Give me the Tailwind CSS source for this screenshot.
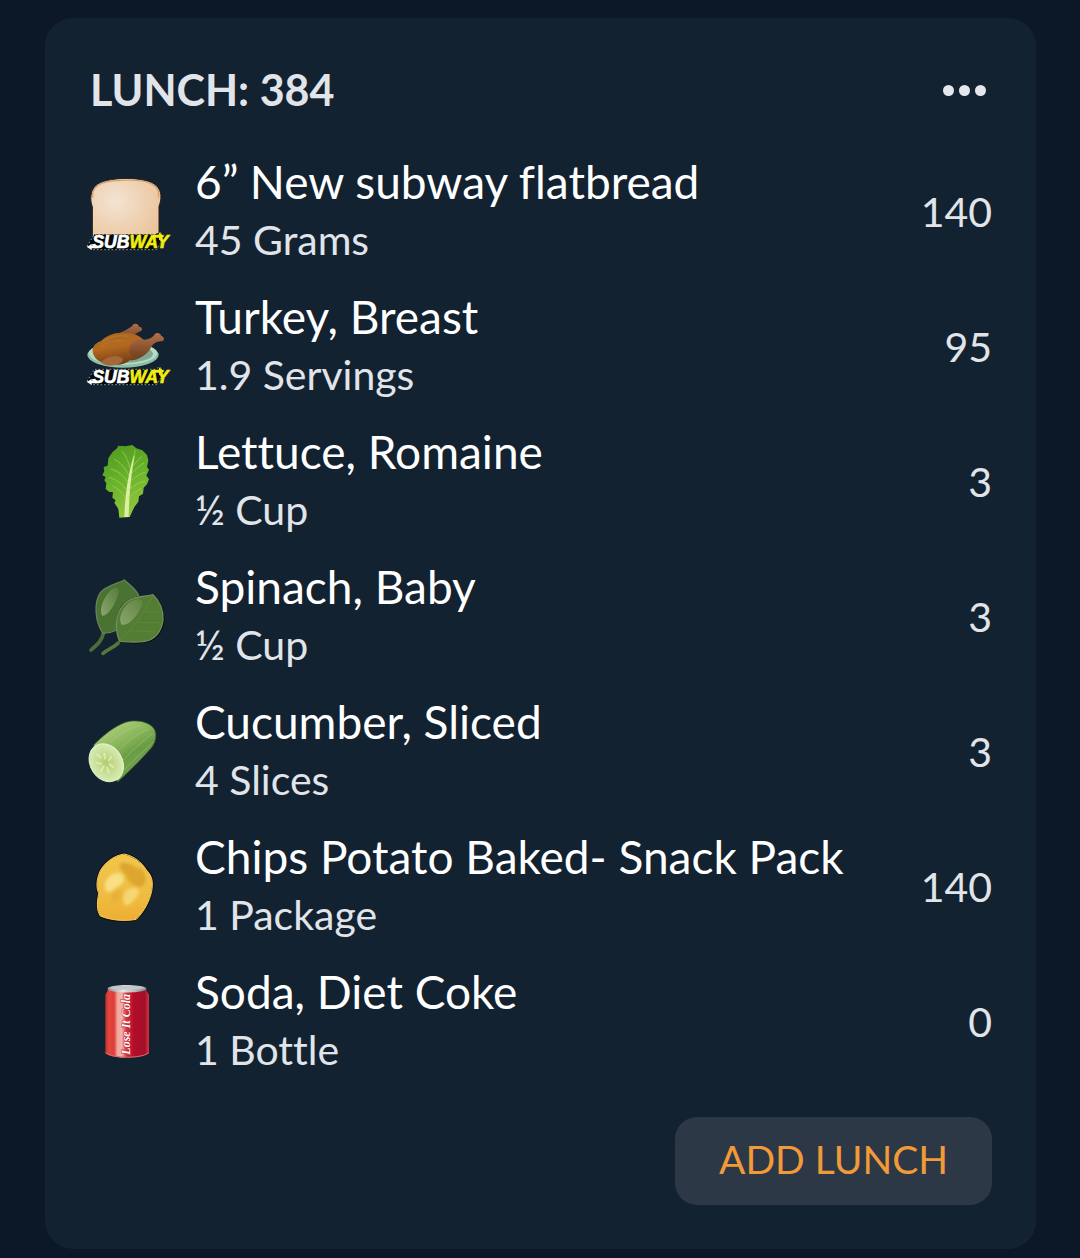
<!DOCTYPE html>
<html lang="en">
<head>
  <meta charset="UTF-8" />
  <meta name="viewport" content="width=device-width, initial-scale=1.0"/>
  <title>Lunch</title>
  <script src="https://cdn.jsdelivr.net/npm/@tailwindcss/browser@4"></script>
</head>
<body class="min-h-screen bg-[#0c1828] pt-[18px] pb-[9px] pl-[45px] pr-11 font-['Lato','Liberation_Sans',sans-serif] text-[#e1e5ea] [font-variant-ligatures:none]">
  <main class="rounded-[28px] bg-[#132231] pl-10 pr-11 pt-[42px] pb-11">
    <!-- Header -->
    <header class="flex items-center justify-between pl-[5px] pr-1.5">
      <h1 class="text-[43px] leading-[60px] font-bold">LUNCH: 384</h1>
      <button aria-label="Lunch options" class="flex h-[60px] items-center gap-[5px]">
        <span class="size-[11px] rounded-full bg-[#e4e7eb]"></span>
        <span class="size-[11px] rounded-full bg-[#e4e7eb]"></span>
        <span class="size-[11px] rounded-full bg-[#e4e7eb]"></span>
      </button>
    </header>

    <!-- Food list -->
    <ul class="mt-[34px] flex flex-col gap-[19px]">
      <li class="flex items-center gap-[30px]">
        <svg class="h-[100px] w-20 shrink-0 overflow-visible" viewBox="30 -9 240 300" aria-hidden="true">
          <defs>
            <radialGradient id="bread" cx=".35" cy=".35" r=".7"><stop offset="0" stop-color="#f4e3d3"/><stop offset="1" stop-color="#ebc59c"/></radialGradient>
          </defs>
          <path d="M52 235V125C44 105 46 76 62 62C88 34 216 32 244 62C262 78 260 104 252 124V235Z" fill="url(#bread)" stroke="#2a1c14" stroke-width="3"/>
          <path d="M54 98C50 82 56 70 70 60C100 42 206 40 234 59C248 68 254 80 250 98" fill="none" stroke="#d2a276" stroke-width="4"/>
          <path d="M36 244L58 208H240L254 201L272 216L258 232L244 254H50Z" fill="#05080a" stroke="#d8dbd5" stroke-width="2" stroke-dasharray="5 6"/>
          <path d="M36 246L50 236V242H64V250H50V255Z" fill="#fff"/>
          <path d="M236 209H252V202L268 214L252 226V218H232Z" fill="#f0ec12"/>
          <text x="52" y="250" class="font-['Liberation_Sans_Narrow','Liberation_Sans',sans-serif] text-[53px] font-bold italic" fill="#fff" stroke="#fff" stroke-width="2">SUB<tspan fill="#f0ec12" stroke="#f0ec12">WAY</tspan></text>
        </svg>
        <div class="min-w-0 flex-1">
          <h2 class="text-[46px] leading-[56px] text-white">6” New subway flatbread</h2>
          <p class="text-[41px] leading-[60px]">45 Grams</p>
        </div>
        <span class="text-[41px] leading-[58px]">140</span>
      </li>

      <li class="flex items-center gap-[30px]">
        <svg class="h-[100px] w-20 shrink-0 overflow-visible" viewBox="30 -24 240 300" aria-hidden="true">
          <defs>
            <linearGradient id="turkey" x1="0" y1="0" x2=".3" y2="1"><stop offset="0" stop-color="#a96522"/><stop offset=".5" stop-color="#b4691f"/><stop offset="1" stop-color="#743f19"/></linearGradient>
            <linearGradient id="leg" x1="0" y1="0" x2="0" y2="1"><stop offset="0" stop-color="#b0704a"/><stop offset="1" stop-color="#74401f"/></linearGradient>
          </defs>
          <ellipse cx="144" cy="150" rx="107" ry="38" fill="#8dbfa5"/>
          <ellipse cx="144" cy="145" rx="103" ry="34" fill="#b6dbc5"/>
          <ellipse cx="146" cy="147" rx="88" ry="27" fill="#7fa995"/>
          <path d="M128 86C146 80 158 72 172 63C174 54 190 54 192 65C204 66 204 78 193 80C180 86 174 92 168 104Z" fill="url(#leg)"/>
          <path d="M58 154C46 132 56 116 78 108C96 90 124 80 152 84C182 84 208 98 214 120C222 148 190 168 164 166C152 180 116 184 98 176C80 174 64 166 58 154Z" fill="url(#turkey)"/>
          <path d="M82 112C104 94 136 88 160 94M76 126C96 110 126 102 148 108" fill="none" stroke="#c98336" stroke-width="5" opacity=".35"/>
          <path d="M166 122C174 106 190 102 208 104C222 104 232 98 238 90C242 80 258 84 258 92C270 96 270 108 258 109C244 110 238 114 230 124C222 142 204 160 184 158C164 154 158 138 166 122Z" fill="url(#leg)"/>
          <path d="M78 172C92 158 114 148 140 158C150 164 136 178 120 180C104 184 88 182 78 172Z" fill="#a6683a"/>
          <path d="M36 229L58 193H240L254 186L272 201L258 217L244 239H50Z" fill="#05080a" stroke="#d8dbd5" stroke-width="2" stroke-dasharray="5 6"/>
          <path d="M36 231L50 221V227H64V235H50V240Z" fill="#fff"/>
          <path d="M236 194H252V187L268 199L252 211V203H232Z" fill="#f0ec12"/>
          <text x="52" y="235" class="font-['Liberation_Sans_Narrow','Liberation_Sans',sans-serif] text-[53px] font-bold italic" fill="#fff" stroke="#fff" stroke-width="2">SUB<tspan fill="#f0ec12" stroke="#f0ec12">WAY</tspan></text>
        </svg>
        <div class="min-w-0 flex-1">
          <h2 class="text-[46px] leading-[56px] text-white">Turkey, Breast</h2>
          <p class="text-[41px] leading-[60px]">1.9 Servings</p>
        </div>
        <span class="text-[41px] leading-[58px]">95</span>
      </li>

      <li class="flex items-center gap-[30px]">
        <svg class="h-[100px] w-20 shrink-0 overflow-visible" viewBox="30 -9 240 300" aria-hidden="true">
          <defs>
            <linearGradient id="lettuce" x1="0" y1="0" x2=".3" y2="1"><stop offset="0" stop-color="#4d9820"/><stop offset=".55" stop-color="#69b22b"/><stop offset="1" stop-color="#8fc63c"/></linearGradient>
          </defs>
          <path d="M133 248L130 222L118 203L122 196L112 188L114 172L102 170L92 162L94 145L88 136L92 126L82 121L88 108L86 96L98 92L100 70L112 52L126 40L130 32L152 34L172 30L184 40L202 46L216 60L220 76L216 96L222 104L214 122L222 132L216 148L206 158L204 176L192 184L190 200L178 216L164 246Z" fill="url(#lettuce)"/>
          <path d="M148 246C150 190 156 130 176 62L179 63C168 120 162 190 161 246Z" fill="#dcefa5"/>
          <path d="M154 190C142 174 128 160 112 152M156 166C142 146 122 132 102 128M158 142C146 120 124 106 106 102M161 120C150 98 134 80 116 72M165 100C160 78 150 58 140 48M158 190C174 178 184 168 198 160M160 166C178 150 194 142 210 138M163 142C180 126 196 116 210 112M166 120C180 104 196 90 208 84M170 98C182 82 192 72 200 64M174 74C178 60 180 52 180 44" fill="none" stroke="#a9d862" stroke-width="3" opacity=".65"/>
        </svg>
        <div class="min-w-0 flex-1">
          <h2 class="text-[46px] leading-[56px] text-white">Lettuce, Romaine</h2>
          <p class="text-[41px] leading-[60px]">½ Cup</p>
        </div>
        <span class="text-[41px] leading-[58px]">3</span>
      </li>

      <li class="flex items-center gap-[30px]">
        <svg class="h-[100px] w-20 shrink-0 overflow-visible" viewBox="30 -9 240 300" aria-hidden="true">
          <defs>
            <linearGradient id="shine" x1="1" y1="0" x2="0" y2="1"><stop offset="0" stop-color="#8ba56e" stop-opacity=".2"/><stop offset="1" stop-color="#8ba56e"/></linearGradient>
          </defs>
          <path d="M86 186C82 212 66 224 48 240" fill="none" stroke="#4c6e3a" stroke-width="11" stroke-linecap="round"/>
          <path d="M84 190C60 156 56 98 76 68C92 48 124 42 148 30C164 46 186 58 193 82C190 130 140 190 84 190Z" fill="#4a7231" stroke="#66825a" stroke-width="4"/>
          <path d="M82 138C70 118 86 82 106 62C122 46 136 54 130 72C122 100 102 136 82 138Z" fill="url(#shine)"/>
          <path d="M134 214C122 230 104 234 84 250" fill="none" stroke="#53773e" stroke-width="11" stroke-linecap="round"/>
          <path d="M138 218C120 184 122 132 144 106C166 78 204 82 234 74C254 92 268 124 266 152C262 188 240 212 210 216C184 220 160 218 134 214Z" fill="none" stroke="#08100f" stroke-width="5"/>
          <path d="M134 214C118 178 122 132 144 106C166 78 204 82 234 74C254 92 266 122 264 150C260 186 238 210 210 214C184 218 158 216 134 214Z" fill="#547d34" stroke="#718c5e" stroke-width="4"/>
          <path d="M136 210C164 184 200 140 232 82M166 182L240 186M188 158L254 158M210 126L256 126" fill="none" stroke="#628944" stroke-width="2"/>
          <path d="M140 164C126 140 150 98 180 90C206 82 206 98 194 120C180 148 156 168 140 164Z" fill="url(#shine)"/>
        </svg>
        <div class="min-w-0 flex-1">
          <h2 class="text-[46px] leading-[56px] text-white">Spinach, Baby</h2>
          <p class="text-[41px] leading-[60px]">½ Cup</p>
        </div>
        <span class="text-[41px] leading-[58px]">3</span>
      </li>

      <li class="flex items-center gap-[30px]">
        <svg class="h-[100px] w-20 shrink-0 overflow-visible" viewBox="30 -9 240 300" aria-hidden="true">
          <defs>
            <linearGradient id="cucumber" x1=".3" y1=".1" x2=".7" y2=".8"><stop offset="0" stop-color="#a9c978"/><stop offset=".35" stop-color="#8ab75c"/><stop offset=".65" stop-color="#6a9c45"/><stop offset="1" stop-color="#6fa34a"/></linearGradient>
            <radialGradient id="flesh"><stop offset="0" stop-color="#b2cc72"/><stop offset=".6" stop-color="#c9df9a"/><stop offset="1" stop-color="#d8ebb4"/></radialGradient>
          </defs>
          <path d="M56 120C84 92 118 64 152 52C182 42 222 50 236 70C248 88 242 112 228 130C198 164 160 202 128 230Z" fill="url(#cucumber)" stroke="#3d6630" stroke-width="2"/>
          <path d="M106 112C136 84 170 66 198 62M132 134C162 104 192 84 220 72M146 164C178 130 208 104 232 86M148 194C180 160 210 136 236 110" fill="none" stroke="#b3d587" stroke-width="3" opacity=".4"/>
          <ellipse cx="94" cy="173" rx="48" ry="60" transform="rotate(-32 94 173)" fill="url(#flesh)" stroke="#e2f2c4" stroke-width="3"/>
          <path d="M66 148L78 158M88 146L90 160M66 174L78 176M78 198L86 184M104 178L114 186M96 188L102 202M108 156L102 166" stroke="#e6f1b1" stroke-width="6" stroke-linecap="round" opacity=".8"/>
        </svg>
        <div class="min-w-0 flex-1">
          <h2 class="text-[46px] leading-[56px] text-white">Cucumber, Sliced</h2>
          <p class="text-[41px] leading-[60px]">4 Slices</p>
        </div>
        <span class="text-[41px] leading-[58px]">3</span>
      </li>

      <li class="flex items-center gap-[30px]">
        <svg class="h-[100px] w-20 shrink-0 overflow-visible" viewBox="30 -9 240 300" aria-hidden="true">
          <defs>
            <linearGradient id="chip" x1="0" y1="0" x2="0" y2="1"><stop offset="0" stop-color="#f2c64b"/><stop offset=".6" stop-color="#eebd43"/><stop offset="1" stop-color="#eeae32"/></linearGradient>
            <filter id="soft"><feGaussianBlur stdDeviation="5"/></filter>
          </defs>
          <path d="M148 40C176 46 202 66 216 88C236 108 236 130 232 154C226 182 210 216 184 240C152 246 110 244 74 230C62 210 64 188 69 160C60 140 64 116 72 96C84 68 116 44 148 40Z" fill="url(#chip)" stroke="#130f0d" stroke-width="5"/>
          <path d="M148 42C176 48 200 66 214 90C234 110 234 130 230 154C224 182 208 214 184 238C152 244 110 242 76 228C64 210 66 188 71 160C62 140 66 116 74 96C86 70 116 46 148 42Z" fill="none" stroke="#f4cd62" stroke-width="3"/>
          <g filter="url(#soft)">
            <path d="M136 70C162 62 176 84 200 88C220 108 214 138 194 142C176 136 160 130 154 108C144 96 130 86 136 70Z" fill="#dda62d"/>
            <path d="M90 132C94 108 122 92 140 102C154 116 146 134 124 142C104 164 88 160 90 132Z" fill="#f8df83"/>
            <path d="M150 156C162 142 184 138 192 152C188 174 170 194 150 196C142 184 144 168 150 156Z" fill="#f7d672"/>
            <path d="M108 164C118 148 138 142 140 158C138 176 130 190 110 186Z" fill="#e4ac33" opacity=".6"/>
          </g>
        </svg>
        <div class="min-w-0 flex-1">
          <h2 class="text-[46px] leading-[56px] text-white">Chips Potato Baked- Snack Pack</h2>
          <p class="text-[41px] leading-[60px]">1 Package</p>
        </div>
        <span class="text-[41px] leading-[58px]">140</span>
      </li>

      <li class="flex items-center gap-[30px]">
        <svg class="h-[100px] w-20 shrink-0 overflow-visible" viewBox="30 6 240 300" aria-hidden="true">
          <defs>
            <linearGradient id="can"><stop offset="0" stop-color="#b93030"/><stop offset=".08" stop-color="#e5473f"/><stop offset=".2" stop-color="#dc3d38"/><stop offset=".28" stop-color="#f2a79f"/><stop offset=".38" stop-color="#efb2ab"/><stop offset=".48" stop-color="#d8323b"/><stop offset=".65" stop-color="#b30d2c"/><stop offset=".9" stop-color="#a30f27"/><stop offset="1" stop-color="#d33440"/></linearGradient>
            <linearGradient id="rim"><stop offset="0" stop-color="#8c949a"/><stop offset=".4" stop-color="#e4e7e8"/><stop offset="1" stop-color="#858c92"/></linearGradient>
          </defs>
          <path d="M100 58C120 66 190 66 212 58L222 74V250C204 268 110 268 91 250V74Z" fill="url(#can)"/>
          <path d="M98 54C110 42 200 42 214 54L213 60C190 70 122 70 99 60Z" fill="url(#rim)"/>
          <ellipse cx="156" cy="53" rx="52" ry="6" fill="#c4c8ca"/>
          <path d="M92 248C112 266 202 266 221 248" fill="none" stroke="#d76b6c" stroke-width="3"/>
          <text transform="translate(164 254) rotate(-90)" class="font-['Liberation_Serif',serif] text-[36px] font-bold italic" fill="#fff" stroke="#c3283a" stroke-width="3" paint-order="stroke">Lose It Cola</text>
        </svg>
        <div class="min-w-0 flex-1">
          <h2 class="text-[46px] leading-[56px] text-white">Soda, Diet Coke</h2>
          <p class="text-[41px] leading-[60px]">1 Bottle</p>
        </div>
        <span class="text-[41px] leading-[58px]">0</span>
      </li>
    </ul>

    <div class="mt-[37px] flex justify-end">
      <button class="h-[88px] rounded-[22px] bg-[#2c3846] px-11 pb-1 text-[39px] text-[#f29a38]">ADD LUNCH</button>
    </div>
  </main>
</body>
</html>
